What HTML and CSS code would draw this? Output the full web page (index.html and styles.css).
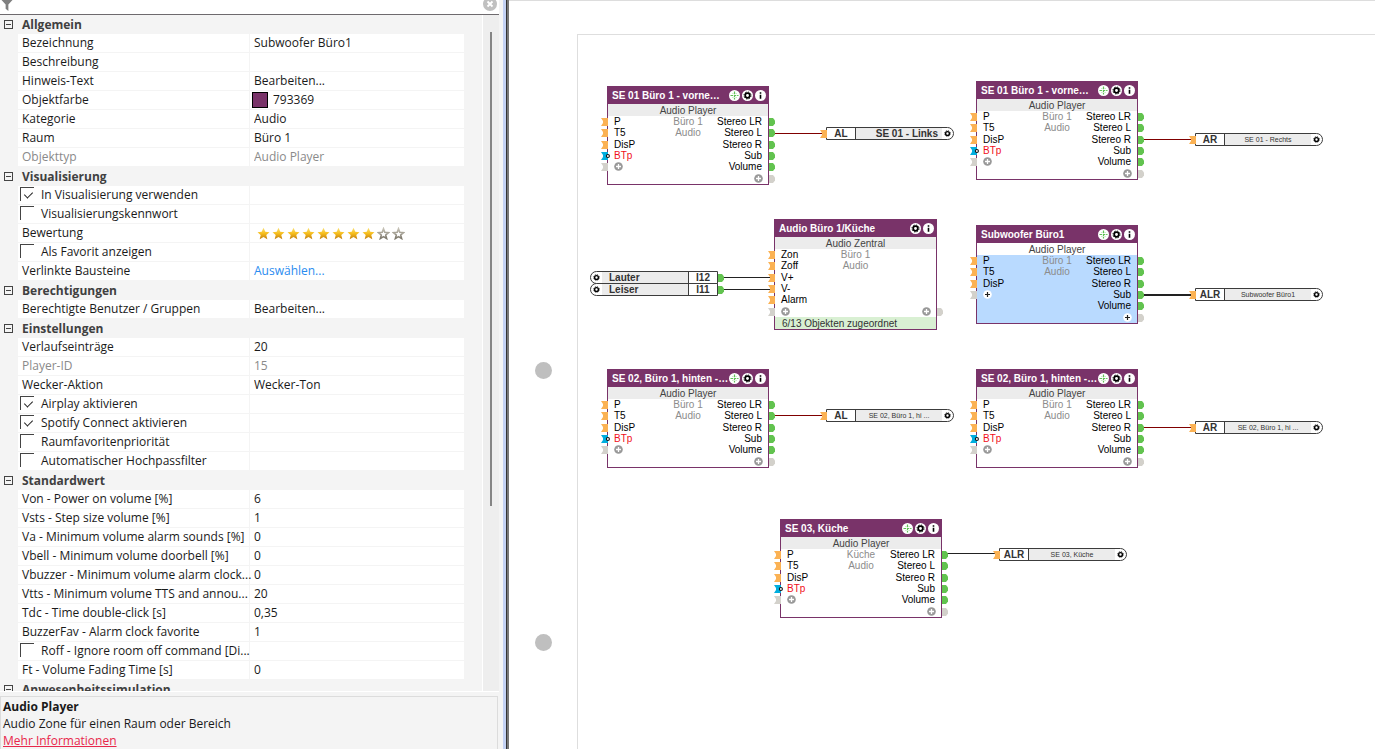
FILE: index.html
```html
<!DOCTYPE html>
<html lang="de">
<head>
<meta charset="utf-8">
<title>Audio Player</title>
<link rel="stylesheet" href="styles.css">
</head>
<body>
<svg class="defs" aria-hidden="true">
  <defs>
    <linearGradient id="gold" x1="0" y1="0" x2="0" y2="1"><stop offset="0" stop-color="#fae27a"/><stop offset=".5" stop-color="#f6bd1c"/><stop offset="1" stop-color="#c07c10"/></linearGradient>
    <linearGradient id="stone" x1="0" y1="0" x2="0" y2="1"><stop offset="0" stop-color="#c4c0b4"/><stop offset="1" stop-color="#7d786c"/></linearGradient>
    <symbol id="star" viewBox="0 0 13 13"><path d="M6.500.8 8.300 4.800 12.500 5.200 9.300 8 10.300 12.300 6.500 10.100 2.700 12.300 3.700 8 .5 5.200 4.700 4.800Z"/></symbol>
    <symbol id="star-empty" viewBox="0 0 13 13"><path d="M6.500 1.800 7.800 5.300 11.500 5.700 8.700 8 9.600 11.500 6.500 9.600 3.400 11.500 4.300 8 1.500 5.700 5.200 5.300Z" fill="#fff" stroke="url(#stone)" stroke-width="1.600"/></symbol>
    <symbol id="move" viewBox="0 0 11 11"><circle cx="5.500" cy="5.500" r="5.500" fill="#fff"/><path d="M5.500 1.500V9.500M1.500 5.500H9.500" stroke="#5fbf55" stroke-width="1.200" stroke-dasharray="2.500 .8"/><path d="M3.500 3.500h.8M6.700 3.500h.8M3.500 7.500h.8M6.700 7.500h.8" stroke="#9fd89a"/></symbol>
    <symbol id="gear" viewBox="0 0 11 11"><circle cx="5.500" cy="5.500" r="5.500" fill="#fff"/><circle cx="5.500" cy="5.500" r="2.300" fill="none" stroke="#000" stroke-width="1.700"/><circle cx="5.500" cy="5.500" r="3.500" fill="none" stroke="#000" stroke-width="1" stroke-dasharray="1.400 1.350"/></symbol>
    <symbol id="info" viewBox="0 0 11 11"><circle cx="5.500" cy="5.500" r="5.500" fill="#fff"/><path d="M4.700 2.200h1.600v1.500H4.700zM4.700 4.700h1.600v4H4.700z"/></symbol>
    <symbol id="plus" viewBox="0 0 9 9"><circle cx="4.500" cy="4.500" r="4.300" fill="#999"/><path d="M4.500 2V7M2 4.500H7" stroke="#fff" stroke-width="1.300"/></symbol>
    <symbol id="plus-light" viewBox="0 0 9 9"><circle cx="4.500" cy="4.500" r="4.300" fill="#fff"/><path d="M4.500 2V7M2 4.500H7" stroke="#222" stroke-width="1.200"/></symbol>
    <symbol id="in" viewBox="0 0 7 8"><path d="M0 0H7V8H0L2 5V3Z"/></symbol>
    <symbol id="in-bt" viewBox="0 0 9 8"><path d="M0 0H7V8H0L2 5V3Z"/><circle cx="6.900" cy="4" r="1.500" fill="#fff" stroke="#111" stroke-width="1.100"/></symbol>
    <symbol id="out" viewBox="0 0 6 8"><path d="M0 0H4L6 2.500V5.500L4 8H0Z"/></symbol>
  </defs>
</svg>
<main class="app">
  <aside class="side">
    <div class="filter">
      <svg class="funnel" viewBox="0 0 12 12"><path d="M0 0H12L7.500 5V12L4.500 9.500V5Z" fill="#808080"/></svg>
      <button class="clear" aria-label="Filter löschen"><svg viewBox="0 0 14 14"><circle cx="7" cy="7" r="7" fill="#c0c0c0"/><path d="M4.500 4.500 9.500 9.500M9.500 4.500 4.500 9.500" stroke="#fff" stroke-width="1.800"/></svg></button>
    </div>
    <div class="scroller">
      <div class="props">
        <h2><button class="fold" aria-label="Allgemein einklappen"></button>Allgemein</h2>
        <div class="prop"><label for="p1">Bezeichnung</label><input id="p1" value="Subwoofer Büro1"></div>
        <div class="prop"><label for="p2">Beschreibung</label><input id="p2" value=""></div>
        <div class="prop"><span>Hinweis-Text</span><button class="edit">Bearbeiten...</button></div>
        <div class="prop"><label for="p3">Objektfarbe</label><div class="color"><i class="swatch"></i><input id="p3" value="793369"></div></div>
        <div class="prop"><label for="p4">Kategorie</label><input id="p4" value="Audio"></div>
        <div class="prop"><label for="p5">Raum</label><input id="p5" value="Büro 1"></div>
        <div class="prop off"><label for="p6">Objekttyp</label><input id="p6" value="Audio Player" readonly></div>
        <h2><button class="fold" aria-label="Visualisierung einklappen"></button>Visualisierung</h2>
        <div class="prop"><label class="check"><input type="checkbox" checked>In Visualisierung verwenden</label><span></span></div>
        <div class="prop"><label class="check"><input type="checkbox">Visualisierungskennwort</label><span></span></div>
        <div class="prop"><span>Bewertung</span><div class="stars"><svg><use href="#star"/></svg><svg><use href="#star"/></svg><svg><use href="#star"/></svg><svg><use href="#star"/></svg><svg><use href="#star"/></svg><svg><use href="#star"/></svg><svg><use href="#star"/></svg><svg><use href="#star"/></svg><svg><use href="#star-empty"/></svg><svg><use href="#star-empty"/></svg></div></div>
        <div class="prop"><label class="check"><input type="checkbox">Als Favorit anzeigen</label><span></span></div>
        <div class="prop"><span>Verlinkte Bausteine</span><a class="choose" href="#">Auswählen...</a></div>
        <h2><button class="fold" aria-label="Berechtigungen einklappen"></button>Berechtigungen</h2>
        <div class="prop"><span>Berechtigte Benutzer / Gruppen</span><button class="edit">Bearbeiten...</button></div>
        <h2><button class="fold" aria-label="Einstellungen einklappen"></button>Einstellungen</h2>
        <div class="prop"><label for="p7">Verlaufseinträge</label><input id="p7" value="20"></div>
        <div class="prop off"><label for="p8">Player-ID</label><input id="p8" value="15" readonly></div>
        <div class="prop"><label for="p9">Wecker-Aktion</label><input id="p9" value="Wecker-Ton"></div>
        <div class="prop"><label class="check"><input type="checkbox" checked>Airplay aktivieren</label><span></span></div>
        <div class="prop"><label class="check"><input type="checkbox" checked>Spotify Connect aktivieren</label><span></span></div>
        <div class="prop"><label class="check"><input type="checkbox">Raumfavoritenpriorität</label><span></span></div>
        <div class="prop"><label class="check"><input type="checkbox">Automatischer Hochpassfilter</label><span></span></div>
        <h2><button class="fold" aria-label="Standardwert einklappen"></button>Standardwert</h2>
        <div class="prop"><label for="p10">Von - Power on volume [%]</label><input id="p10" value="6"></div>
        <div class="prop"><label for="p11">Vsts - Step size volume [%]</label><input id="p11" value="1"></div>
        <div class="prop"><label for="p12">Va - Minimum volume alarm sounds [%]</label><input id="p12" value="0"></div>
        <div class="prop"><label for="p13">Vbell - Minimum volume doorbell [%]</label><input id="p13" value="0"></div>
        <div class="prop"><label for="p14">Vbuzzer - Minimum volume alarm clock...</label><input id="p14" value="0"></div>
        <div class="prop"><label for="p15">Vtts - Minimum volume TTS and annou...</label><input id="p15" value="20"></div>
        <div class="prop"><label for="p16">Tdc - Time double-click [s]</label><input id="p16" value="0,35"></div>
        <div class="prop"><label for="p17">BuzzerFav - Alarm clock favorite</label><input id="p17" value="1"></div>
        <div class="prop"><label class="check"><input type="checkbox">Roff - Ignore room off command [Di...</label><span></span></div>
        <div class="prop"><label for="p18">Ft - Volume Fading Time [s]</label><input id="p18" value="0"></div>
        <h2><button class="fold" aria-label="Anwesenheitssimulation einklappen"></button>Anwesenheitssimulation</h2>
      </div>
      <div class="track"><div class="thumb"></div></div>
    </div>
    <section class="help">
      <strong>Audio Player</strong>
      <p>Audio Zone für einen Raum oder Bereich</p>
      <a href="#">Mehr Informationen</a>
    </section>
  </aside>
  <div class="splitter"></div>
  <section class="canvas">
    <div class="sheet"></div>
    <i class="hole hole-a"></i>
    <i class="hole hole-b"></i>

    <i class="wire red w1"></i><i class="wire red w2"></i><i class="wire w3"></i><i class="wire w4"></i><i class="wire thick w5"></i><i class="wire red w6"></i><i class="wire red w7"></i><i class="wire w8"></i>

    <article class="block b1">
      <header><h3>SE 01 Büro 1 - vorne…</h3><svg><use href="#move"/></svg><svg><use href="#gear"/></svg><svg><use href="#info"/></svg></header>
      <p class="type">Audio Player</p>
      <ul>
        <li><svg class="pin"><use href="#in"/></svg><span>P</span><em>Büro 1</em><b>Stereo LR</b><svg class="pout"><use href="#out"/></svg></li>
        <li><svg class="pin"><use href="#in"/></svg><span>T5</span><em>Audio</em><b>Stereo L</b><svg class="pout"><use href="#out"/></svg></li>
        <li><svg class="pin"><use href="#in"/></svg><span>DisP</span><em></em><b>Stereo R</b><svg class="pout"><use href="#out"/></svg></li>
        <li><svg class="pin bt"><use href="#in-bt"/></svg><span class="alert">BTp</span><em></em><b>Sub</b><svg class="pout"><use href="#out"/></svg></li>
        <li><svg class="pin idle"><use href="#in"/></svg><span><svg class="add"><use href="#plus"/></svg></span><em></em><b>Volume</b><svg class="pout"><use href="#out"/></svg></li>
        <li><span></span><em></em><b><svg class="add"><use href="#plus"/></svg></b><svg class="pout idle"><use href="#out"/></svg></li>
      </ul>
    </article>

    <article class="block b2">
      <header><h3>SE 01 Büro 1 - vorne…</h3><svg><use href="#move"/></svg><svg><use href="#gear"/></svg><svg><use href="#info"/></svg></header>
      <p class="type">Audio Player</p>
      <ul>
        <li><svg class="pin"><use href="#in"/></svg><span>P</span><em>Büro 1</em><b>Stereo LR</b><svg class="pout"><use href="#out"/></svg></li>
        <li><svg class="pin"><use href="#in"/></svg><span>T5</span><em>Audio</em><b>Stereo L</b><svg class="pout"><use href="#out"/></svg></li>
        <li><svg class="pin"><use href="#in"/></svg><span>DisP</span><em></em><b>Stereo R</b><svg class="pout"><use href="#out"/></svg></li>
        <li><svg class="pin bt"><use href="#in-bt"/></svg><span class="alert">BTp</span><em></em><b>Sub</b><svg class="pout"><use href="#out"/></svg></li>
        <li><svg class="pin idle"><use href="#in"/></svg><span><svg class="add"><use href="#plus"/></svg></span><em></em><b>Volume</b><svg class="pout"><use href="#out"/></svg></li>
        <li><span></span><em></em><b><svg class="add"><use href="#plus"/></svg></b><svg class="pout idle"><use href="#out"/></svg></li>
      </ul>
    </article>

    <article class="block b3">
      <header><h3>Audio Büro 1/Küche</h3><svg><use href="#gear"/></svg><svg><use href="#info"/></svg></header>
      <p class="type">Audio Zentral</p>
      <ul>
        <li><svg class="pin"><use href="#in"/></svg><span>Zon</span><em>Büro 1</em><b></b></li>
        <li><svg class="pin"><use href="#in"/></svg><span>Zoff</span><em>Audio</em><b></b></li>
        <li><svg class="pin"><use href="#in"/></svg><span>V+</span><em></em><b></b></li>
        <li><svg class="pin"><use href="#in"/></svg><span>V-</span><em></em><b></b></li>
        <li><svg class="pin"><use href="#in"/></svg><span>Alarm</span><em></em><b></b></li>
        <li><svg class="pin idle"><use href="#in"/></svg><span><svg class="add"><use href="#plus"/></svg></span><em></em><b><svg class="add"><use href="#plus"/></svg></b><svg class="pout idle"><use href="#out"/></svg></li>
      </ul>
      <footer>6/13 Objekten zugeordnet</footer>
    </article>

    <article class="block b4 selected">
      <header><h3>Subwoofer Büro1</h3><svg><use href="#move"/></svg><svg><use href="#gear"/></svg><svg><use href="#info"/></svg></header>
      <p class="type">Audio Player</p>
      <ul>
        <li><svg class="pin"><use href="#in"/></svg><span>P</span><em>Büro 1</em><b>Stereo LR</b><svg class="pout"><use href="#out"/></svg></li>
        <li><svg class="pin"><use href="#in"/></svg><span>T5</span><em>Audio</em><b>Stereo L</b><svg class="pout"><use href="#out"/></svg></li>
        <li><svg class="pin"><use href="#in"/></svg><span>DisP</span><em></em><b>Stereo R</b><svg class="pout"><use href="#out"/></svg></li>
        <li><svg class="pin idle"><use href="#in"/></svg><span><svg class="add"><use href="#plus-light"/></svg></span><em></em><b>Sub</b><svg class="pout"><use href="#out"/></svg></li>
        <li><span></span><em></em><b>Volume</b><svg class="pout"><use href="#out"/></svg></li>
        <li><span></span><em></em><b><svg class="add"><use href="#plus-light"/></svg></b><svg class="pout idle"><use href="#out"/></svg></li>
      </ul>
    </article>

    <article class="block b5">
      <header><h3>SE 02, Büro 1, hinten -…</h3><svg><use href="#move"/></svg><svg><use href="#gear"/></svg><svg><use href="#info"/></svg></header>
      <p class="type">Audio Player</p>
      <ul>
        <li><svg class="pin"><use href="#in"/></svg><span>P</span><em>Büro 1</em><b>Stereo LR</b><svg class="pout"><use href="#out"/></svg></li>
        <li><svg class="pin"><use href="#in"/></svg><span>T5</span><em>Audio</em><b>Stereo L</b><svg class="pout"><use href="#out"/></svg></li>
        <li><svg class="pin"><use href="#in"/></svg><span>DisP</span><em></em><b>Stereo R</b><svg class="pout"><use href="#out"/></svg></li>
        <li><svg class="pin bt"><use href="#in-bt"/></svg><span class="alert">BTp</span><em></em><b>Sub</b><svg class="pout"><use href="#out"/></svg></li>
        <li><svg class="pin idle"><use href="#in"/></svg><span><svg class="add"><use href="#plus"/></svg></span><em></em><b>Volume</b><svg class="pout"><use href="#out"/></svg></li>
        <li><span></span><em></em><b><svg class="add"><use href="#plus"/></svg></b><svg class="pout idle"><use href="#out"/></svg></li>
      </ul>
    </article>

    <article class="block b6">
      <header><h3>SE 02, Büro 1, hinten -…</h3><svg><use href="#move"/></svg><svg><use href="#gear"/></svg><svg><use href="#info"/></svg></header>
      <p class="type">Audio Player</p>
      <ul>
        <li><svg class="pin"><use href="#in"/></svg><span>P</span><em>Büro 1</em><b>Stereo LR</b><svg class="pout"><use href="#out"/></svg></li>
        <li><svg class="pin"><use href="#in"/></svg><span>T5</span><em>Audio</em><b>Stereo L</b><svg class="pout"><use href="#out"/></svg></li>
        <li><svg class="pin"><use href="#in"/></svg><span>DisP</span><em></em><b>Stereo R</b><svg class="pout"><use href="#out"/></svg></li>
        <li><svg class="pin bt"><use href="#in-bt"/></svg><span class="alert">BTp</span><em></em><b>Sub</b><svg class="pout"><use href="#out"/></svg></li>
        <li><svg class="pin idle"><use href="#in"/></svg><span><svg class="add"><use href="#plus"/></svg></span><em></em><b>Volume</b><svg class="pout"><use href="#out"/></svg></li>
        <li><span></span><em></em><b><svg class="add"><use href="#plus"/></svg></b><svg class="pout idle"><use href="#out"/></svg></li>
      </ul>
    </article>

    <article class="block b7">
      <header><h3>SE 03, Küche</h3><svg><use href="#move"/></svg><svg><use href="#gear"/></svg><svg><use href="#info"/></svg></header>
      <p class="type">Audio Player</p>
      <ul>
        <li><svg class="pin"><use href="#in"/></svg><span>P</span><em>Küche</em><b>Stereo LR</b><svg class="pout"><use href="#out"/></svg></li>
        <li><svg class="pin"><use href="#in"/></svg><span>T5</span><em>Audio</em><b>Stereo L</b><svg class="pout"><use href="#out"/></svg></li>
        <li><svg class="pin"><use href="#in"/></svg><span>DisP</span><em></em><b>Stereo R</b><svg class="pout"><use href="#out"/></svg></li>
        <li><svg class="pin bt"><use href="#in-bt"/></svg><span class="alert">BTp</span><em></em><b>Sub</b><svg class="pout"><use href="#out"/></svg></li>
        <li><svg class="pin idle"><use href="#in"/></svg><span><svg class="add"><use href="#plus"/></svg></span><em></em><b>Volume</b><svg class="pout"><use href="#out"/></svg></li>
        <li><span></span><em></em><b><svg class="add"><use href="#plus"/></svg></b><svg class="pout idle"><use href="#out"/></svg></li>
      </ul>
    </article>

    <div class="tag source t1"><svg class="cog"><use href="#gear"/></svg><span class="name">Lauter</span><b>I12</b><svg class="pout"><use href="#out"/></svg></div>
    <div class="tag source t2"><svg class="cog"><use href="#gear"/></svg><span class="name">Leiser</span><b>I11</b><svg class="pout"><use href="#out"/></svg></div>
    <div class="tag t3"><svg class="pin"><use href="#in"/></svg><b>AL</b><span class="name end">SE 01 - Links</span><svg class="cog"><use href="#gear"/></svg></div>
    <div class="tag t4"><svg class="pin"><use href="#in"/></svg><b>AR</b><span class="name small">SE 01 - Rechts</span><svg class="cog"><use href="#gear"/></svg></div>
    <div class="tag t5"><svg class="pin"><use href="#in"/></svg><b>ALR</b><span class="name small">Subwoofer Büro1</span><svg class="cog"><use href="#gear"/></svg></div>
    <div class="tag t6"><svg class="pin"><use href="#in"/></svg><b>AL</b><span class="name small">SE 02, Büro 1, hi ...</span><svg class="cog"><use href="#gear"/></svg></div>
    <div class="tag t7"><svg class="pin"><use href="#in"/></svg><b>AR</b><span class="name small">SE 02, Büro 1, hi ...</span><svg class="cog"><use href="#gear"/></svg></div>
    <div class="tag t8"><svg class="pin"><use href="#in"/></svg><b>ALR</b><span class="name small">SE 03, Küche</span><svg class="cog"><use href="#gear"/></svg></div>
  </section>
</main>
</body>
</html>
```
FILE: styles.css
```css
* { box-sizing: border-box; margin: 0; padding: 0; }
body { background: #fff; color: #1a1a1a; font: 12px/18px "Open Sans", "Noto Sans", sans-serif; }
svg { display: block; flex: none; }
button, input { font: inherit; color: inherit; border: 0; background: none; text-align: left; }
.defs { position: absolute; width: 0; height: 0; }
.app { display: flex; height: 100vh; overflow: hidden; }

/* property panel */
.side { display: flex; flex-direction: column; flex: none; width: 503px; padding-right: 4px; background: #f4f4f4; }
.filter { display: flex; justify-content: space-between; flex: none; height: 15px; background: #fff; border-bottom: 1px solid #6e6a6e; overflow: hidden; }
.funnel { width: 12px; height: 11px; margin-left: 1px; }
.clear { width: 14px; height: 14px; margin-top: -3px; margin-right: 2px; }
.clear svg { width: 14px; height: 14px; }
.scroller { display: flex; flex: 1; min-height: 0; margin-bottom: 4px; border-bottom: 1px solid #fff; }
.props { flex: 1; overflow: hidden; padding-right: 18px; }
.props h2 { display: flex; align-items: center; gap: 9px; height: 19px; padding-left: 4px; color: #404040; font-size: 12px; line-height: 18px; }
.fold { position: relative; width: 9px; height: 9px; border: 1px solid #444; }
.fold::before { content: ""; position: absolute; left: 1px; right: 1px; top: 3px; height: 1px; background: #444; }
.prop { display: grid; grid-template-columns: 231px 1fr; gap: 1px; height: 19px; padding-left: 18px; padding-bottom: 1px; }
.prop > * { min-width: 0; height: 18px; padding-left: 4px; background: #fff; white-space: nowrap; }
.prop > :first-child { z-index: 1; }
.off { color: #8a8a8a; }
.check { display: flex; gap: 7px; }
.prop .check { padding-left: 2px; }
.check input { appearance: none; position: relative; flex: none; width: 14px; height: 14px; margin-top: 1px; border: solid #444; border-width: 1px 0 0 1px; }
.check input:checked::before { content: ""; position: absolute; left: 5px; top: 2px; width: 4px; height: 7px; border: solid #222; border-width: 0 1px 1px 0; transform: rotate(45deg); }
.prop .color { display: flex; align-items: center; gap: 5px; padding-left: 2px; }
.color input { min-width: 0; flex: 1; }
.swatch { flex: none; width: 16px; height: 16px; background: #793369; border: 1px solid #000; }
.prop .stars { display: flex; align-items: center; gap: 2px; padding-left: 7px; }
.stars svg { width: 13px; height: 13px; fill: url(#gold); }
.choose { color: #2a8cf0; text-decoration: none; }
.track { flex: none; width: 17px; padding-left: 7px; padding-top: 17px; background: #eee; border-left: 1px solid #fff; }
.thumb { width: 2px; height: 72%; background: #858585; }
.help { flex: none; margin-right: 1px; height: 53px; padding-left: 2px; padding-top: 1px; border: 1px solid #dcdcdc; border-width: 1px 1px 0 1px; line-height: 17px; }
.help strong { display: block; }
.help a { color: #e8274b; }
.splitter { flex: none; width: 6px; border: solid #777; border-width: 0 2px 0 0; background: linear-gradient(to right, #c3d1f3 3px, #333 3px); }

/* wiring canvas */
.canvas { position: relative; flex: 1; overflow: hidden; border-top: 1px solid #ddd; font: 10px/12px "Liberation Sans", Arial, sans-serif; }
.sheet { position: absolute; left: 68px; top: 33px; right: 0; bottom: 0; border: solid #dedede; border-width: 1px 0 0 1px; }
.hole { position: absolute; left: 26px; width: 17px; height: 17px; border-radius: 50%; background: #bfbfbf; }
.hole-a { top: 361px; }
.hole-b { top: 633px; }

.block { position: absolute; width: 162px; border: solid #793369; border-width: 0 1px 1px; background: #fff; }
.block header { display: flex; align-items: center; gap: 2px; height: 18px; margin: 0 -1px; padding: 1px 3px 0 5px; background: #793369; color: #fff; }
.block header svg { width: 11px; height: 11px; }
.block h3 { flex: 1; min-width: 0; white-space: nowrap; font-size: 10px; }
.type { height: 12px; background: #ececec; color: #444; text-align: center; line-height: 13px; }
.block ul { display: grid; grid-template-rows: repeat(6, minmax(0, 1fr)); height: 68px; list-style: none; }
.block li { position: relative; display: grid; grid-template-columns: 1fr auto 1fr; align-items: center; padding: 0 6px; color: #000; line-height: 11px; }
.block li b { font-weight: normal; justify-self: end; }
.block em { color: #8c8c8c; font-style: normal; }
.block .alert { color: #f01020; }
.block footer { height: 12px; padding-left: 7px; background: #d9f0d3; color: #333; line-height: 13px; }
.selected ul { background: #b9daff; }
.selected .type { background: #fff; }
.add { width: 9px; height: 9px; }
.block b .add { margin-right: -1px; }
.pin { position: absolute; left: -7px; top: 2px; width: 7px; height: 8px; fill: #fbb254; }
.pin.bt { width: 9px; fill: #00aede; }
.pout { position: absolute; right: -7px; top: 2px; width: 6px; height: 8px; fill: #62c34f; }
.pin.idle, .pout.idle { fill: #d3d1cb; }
.b1 { left: 98px; top: 85px; }
.b2 { left: 467px; top: 80px; }
.b3 { left: 265px; top: 218px; width: 163px; }
.b4 { left: 467px; top: 224px; }
.b5 { left: 98px; top: 368px; }
.b6 { left: 467px; top: 368px; }
.b7 { left: 271px; top: 518px; }

.tag { position: absolute; display: flex; align-items: center; width: 128px; height: 13px; border: 1px solid #3c3c3c; border-radius: 0 7px 7px 0; background: #fff; color: #333; line-height: 11px; }
.tag b { width: 29px; border-right: 1px solid #3c3c3c; text-align: center; }
.tag .name { flex: 1; height: 11px; padding: 0 4px; background: #ececec; font-weight: bold; white-space: nowrap; }
.tag .end { text-align: right; }
.tag .small { padding: 0; font-size: 7px; font-weight: normal; text-align: center; }
.tag .cog { width: 9px; height: 9px; margin: 0 1px; }
.source { border-radius: 7px 0 0 7px; }
.source b { border-right: 0; border-left: 1px solid #3c3c3c; }
.source .name { padding-left: 7px; }
.t1 { left: 81px; top: 270px; }
.t2 { left: 81px; top: 282px; }
.t3 { left: 317px; top: 126px; }
.t4 { left: 686px; top: 132px; }
.t5 { left: 686px; top: 287px; }
.t6 { left: 317px; top: 408px; }
.t7 { left: 686px; top: 420px; }
.t8 { left: 490px; top: 547px; }

.wire { position: absolute; width: 50px; height: 1px; background: #222; }
.wire.red { background: #800000; }
.wire.thick { height: 2px; }
.w1 { left: 265px; top: 132px; }
.w2 { left: 634px; top: 138px; }
.w3 { left: 213px; top: 276px; }
.w4 { left: 213px; top: 288px; }
.w5 { left: 634px; top: 293px; }
.w6 { left: 265px; top: 414px; }
.w7 { left: 634px; top: 426px; }
.w8 { left: 438px; top: 552px; }
```
